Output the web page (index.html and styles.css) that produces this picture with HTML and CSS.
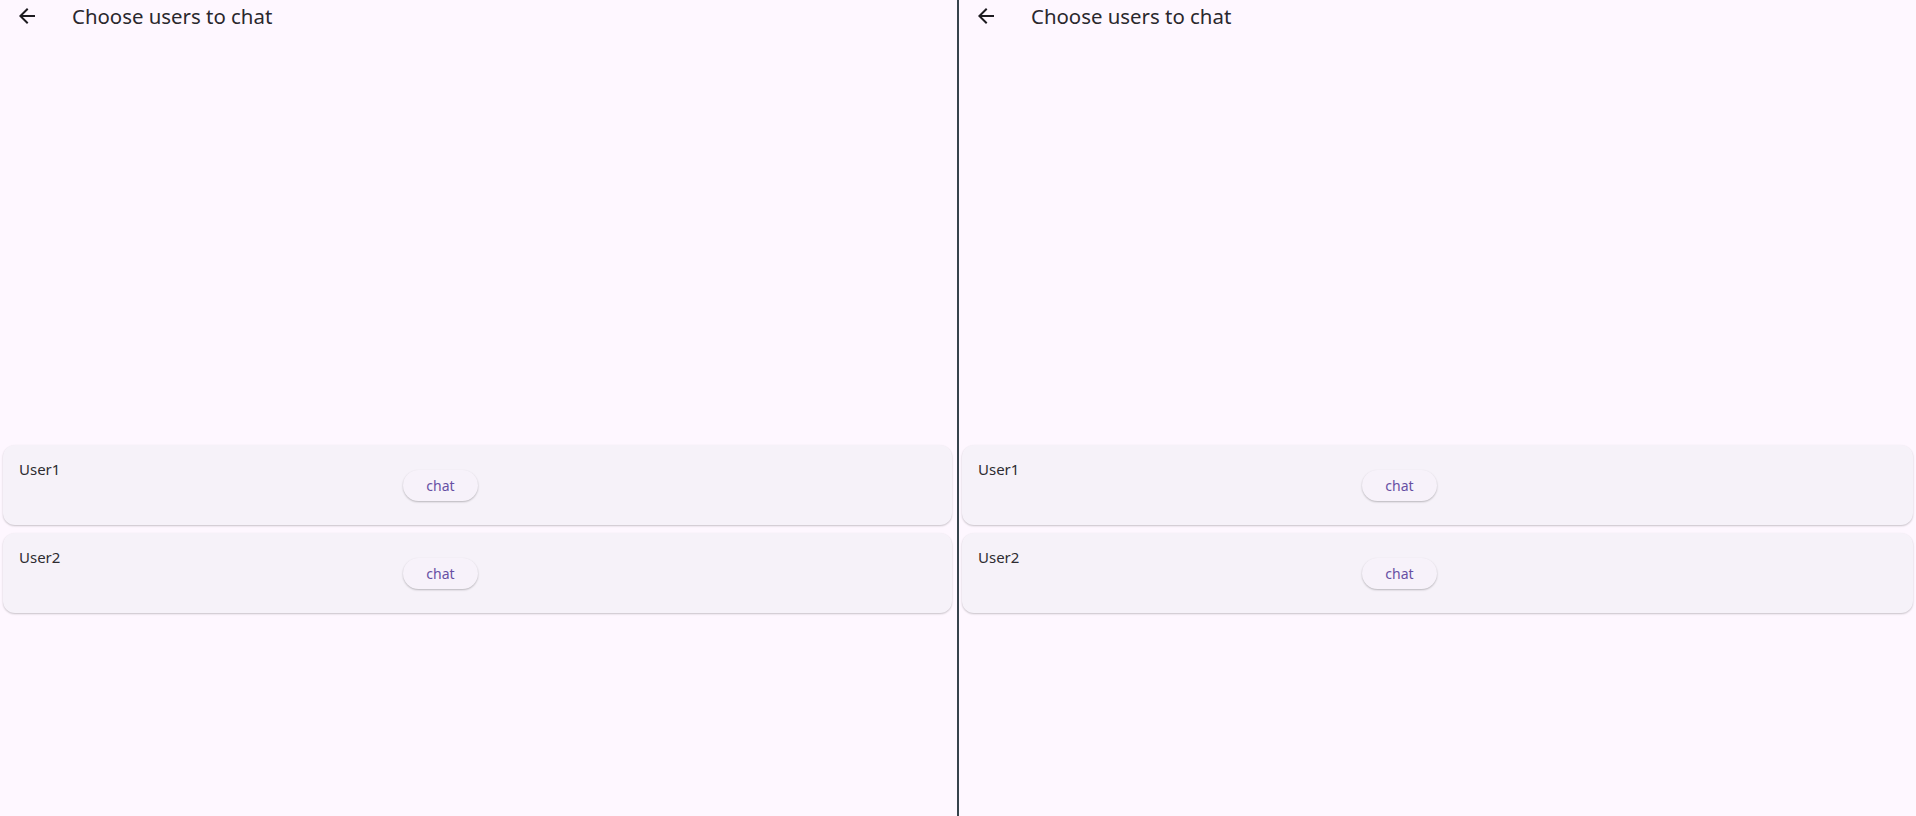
FILE: index.html
```html
<!DOCTYPE html>
<html>
<head>
<meta charset="utf-8">
<link rel="stylesheet" href="styles.css">
</head>
<body>
<div class="split">
  <section class="pane pane-left">
    <header class="bar">
      <span class="back"><svg viewBox="0 0 24 24" width="24" height="24"><path d="M20 11H7.83l5.59-5.59L12 4l-8 8 8 8 1.41-1.41L7.83 13H20v-2z" fill="#1d1b20"/></svg></span>
      <h1 class="title">Choose users to chat</h1>
    </header>
    <div class="list">
      <div class="card"><div class="name">User1</div><button class="chat">chat</button></div>
      <div class="card"><div class="name">User2</div><button class="chat">chat</button></div>
    </div>
  </section>
  <div class="divider"></div>
  <section class="pane pane-right">
    <header class="bar">
      <span class="back"><svg viewBox="0 0 24 24" width="24" height="24"><path d="M20 11H7.83l5.59-5.59L12 4l-8 8 8 8 1.41-1.41L7.83 13H20v-2z" fill="#1d1b20"/></svg></span>
      <h1 class="title">Choose users to chat</h1>
    </header>
    <div class="list">
      <div class="card"><div class="name">User1</div><button class="chat">chat</button></div>
      <div class="card"><div class="name">User2</div><button class="chat">chat</button></div>
    </div>
  </section>
</div>
</body>
</html>
```

FILE: styles.css
```css
* { box-sizing: border-box; }
html, body {
  margin: 0;
  padding: 0;
  background: #fef7ff;
  font-family: "Noto Sans", "DejaVu Sans", sans-serif;
  color: #1d1b20;
}
.split {
  display: flex;
  height: 816px;
  overflow: hidden;
}
.pane {
  width: 957px;
  flex: none;
  display: flex;
  flex-direction: column;
}
.pane-left { padding: 0 5px 0 3px; }
.pane-right { padding: 0 3px 0 3px; }
.divider {
  width: 2px;
  flex: none;
  background: #36434c;
}
.bar {
  height: 32px;
  display: flex;
  align-items: center;
  margin-left: -3px;
}
.back {
  width: 24px;
  height: 24px;
  margin-left: 15px;
  display: flex;
}
.title {
  margin: 0 0 1px 33px;
  font-size: 20.4px;
  font-weight: 400;
  line-height: 28px;
  color: #2a282d;
}
.list {
  padding-top: 413px;
  display: flex;
  flex-direction: column;
  gap: 8px;
}
.card {
  height: 80px;
  border-radius: 12px;
  background: #f6f2f9;
  box-shadow: 0 1px 2px rgba(0,0,0,0.22);
  padding: 14px 16px 16px 16px;
  display: grid;
  grid-template-columns: 384px auto;
  align-items: center;
}
.name {
  align-self: start;
  font-size: 15px;
  line-height: 20px;
  color: #2e2c31;
}
.chat {
  width: 75px;
  height: 31px;
  margin-top: 2px;
  border: none;
  border-radius: 15.5px;
  background: #f7f2fa;
  box-shadow: 0 1px 2px rgba(0,0,0,0.25);
  color: #6750a4;
  font-family: "Noto Sans", "DejaVu Sans", sans-serif;
  font-size: 14px;
  padding: 0;
  justify-self: start;
}
```
